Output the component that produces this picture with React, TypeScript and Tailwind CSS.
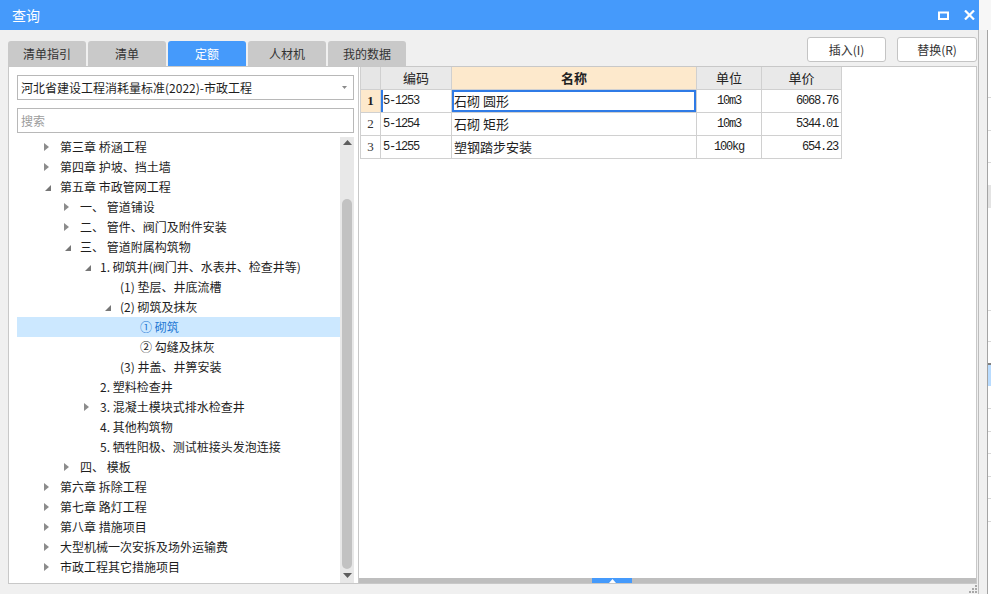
import React from 'react';

type Node = { l: number; t: string; a: '' | 'c' | 'e'; sel?: boolean };

const tree: Node[] = [
  { l: 0, t: '第三章 桥涵工程', a: 'c' },
  { l: 0, t: '第四章 护坡、挡土墙', a: 'c' },
  { l: 0, t: '第五章 市政管网工程', a: 'e' },
  { l: 1, t: '一、 管道铺设', a: 'c' },
  { l: 1, t: '二、 管件、阀门及附件安装', a: 'c' },
  { l: 1, t: '三、 管道附属构筑物', a: 'e' },
  { l: 2, t: '1. 砌筑井(阀门井、水表井、检查井等)', a: 'e' },
  { l: 3, t: '(1) 垫层、井底流槽', a: '' },
  { l: 3, t: '(2) 砌筑及抹灰', a: 'e' },
  { l: 4, t: '① 砌筑', a: '', sel: true },
  { l: 4, t: '② 勾缝及抹灰', a: '' },
  { l: 3, t: '(3) 井盖、井箅安装', a: '' },
  { l: 2, t: '2. 塑料检查井', a: '' },
  { l: 2, t: '3. 混凝土模块式排水检查井', a: 'c' },
  { l: 2, t: '4. 其他构筑物', a: '' },
  { l: 2, t: '5. 牺牲阳极、测试桩接头发泡连接', a: '' },
  { l: 1, t: '四、 模板', a: 'c' },
  { l: 0, t: '第六章 拆除工程', a: 'c' },
  { l: 0, t: '第七章 路灯工程', a: 'c' },
  { l: 0, t: '第八章 措施项目', a: 'c' },
  { l: 0, t: '大型机械一次安拆及场外运输费', a: 'c' },
  { l: 0, t: '市政工程其它措施项目', a: 'c' },
];

const rows = [
  { n: '1', code: '5-1253', name: '石砌 圆形', unit: '10m3', price: '6068.76' },
  { n: '2', code: '5-1254', name: '石砌 矩形', unit: '10m3', price: '5344.01' },
  { n: '3', code: '5-1255', name: '塑钢踏步安装', unit: '100kg', price: '654.23' },
];

// background window peeking out on the right
const strip = [
  { h: 68, c: 'border-b border-[#d8d8d8]' },
  { h: 33, c: 'border-b border-[#d8d8d8]' },
  { h: 32, c: 'border-b border-[#d8d8d8]' },
  { h: 22, c: '' },
  { h: 23, c: 'bg-[#e4e4e4]' },
  { h: 103, c: 'border-b border-[#d8d8d8]' },
  { h: 31, c: 'border-b border-[#d8d8d8]' },
  { h: 23, c: 'border-b-2 border-[#808080]' },
  { h: 21, c: 'bg-[#b9dcff]' },
  { h: 23, c: 'border-b border-[#d8d8d8]' },
  { h: 23, c: 'border-b border-[#d8d8d8]' },
  { h: 22, c: 'border-b border-[#d8d8d8]' },
  { h: 23, c: 'border-b border-[#d8d8d8]' },
  { h: 22, c: 'border-b border-[#d8d8d8]' },
  { h: 23, c: 'border-b border-[#d8d8d8]' },
];

function Arrow({ a }: { a: Node['a'] }) {
  if (a === 'c')
    return (
      <svg width="5" height="8" viewBox="0 0 5 8" className="ml-[1px]">
        <polygon points="0,0 5,4 0,8" fill="#8c8c8c" />
      </svg>
    );
  if (a === 'e')
    return (
      <svg width="6" height="6" viewBox="0 0 6 6" className="ml-[2px] mt-[2px]">
        <polygon points="6,0 6,6 0,6" fill="#767676" />
      </svg>
    );
  return null;
}

const mono = "font-['Liberation_Mono',monospace] text-[12px] tracking-[-1.2px]";

export default function App() {
  const tabs = ['清单指引', '清单', '定额', '人材机', '我的数据'];

  return (
    <div className="w-[991px] h-[594px] flex overflow-hidden bg-[#f0f0f0] text-[12px] text-[#1e1e1e] font-['Noto_Sans_CJK_SC','Microsoft_YaHei',sans-serif]">
      <div className="relative w-[979px] h-full flex flex-col shrink-0">
        {/* title bar */}
        <div className="h-[30px] bg-[#459afb] flex items-center pl-[12px] pr-[4px] text-white">
          <span className="text-[14px]">查询</span>
          <div className="ml-auto flex items-center gap-[15px]">
            <svg width="11" height="9" viewBox="0 0 11 9">
              <rect x="1" y="1.5" width="9" height="6.5" fill="none" stroke="#fff" strokeWidth="2" />
            </svg>
            <svg width="11" height="10" viewBox="0 0 11 10">
              <path d="M1 0.5 L10 9.5 M10 0.5 L1 9.5" stroke="#fff" strokeWidth="2.2" />
            </svg>
          </div>
        </div>

        <div className="flex-1 flex flex-col pl-[8px] pr-[1px] border-r border-[#bdbdbd]">
          {/* tabs + buttons */}
          <div className="h-[36px] flex items-end">
            <div className="flex gap-[2px]">
              {tabs.map((t) => (
                <div
                  key={t}
                  className={
                    'w-[78px] h-[25px] rounded-t-[3px] flex items-center justify-center ' +
                    (t === '定额' ? 'bg-[#459afb] text-white' : 'bg-[#c9c9c9] text-[#333]')
                  }
                >
                  {t}
                </div>
              ))}
            </div>
            <div className="flex-1 self-start mt-[7px] flex justify-end gap-[11px]">
              <button className="w-[79px] h-[25px] bg-white border border-[#c4c4c4] rounded-[3px] text-[#333]">插入(I)</button>
              <button className="w-[80px] h-[25px] bg-white border border-[#c4c4c4] rounded-[3px] text-[#333]">替换(R)</button>
            </div>
          </div>

          {/* panels */}
          <div className="h-[518px] flex">
            {/* left */}
            <div className="w-[351px] h-full bg-white border border-[#c8c8c8] flex flex-col pl-[8px] pr-[4px] pt-[8px]">
              <div className="h-[25px] border border-[#b8b8b8] flex items-center pl-[3px] pr-[6px]">
                <span>河北省建设工程消耗量标准(2022)-市政工程</span>
                <svg width="5" height="3" viewBox="0 0 5 3" className="ml-auto">
                  <polygon points="0,0 5,0 2.5,3" fill="#8a8a8a" />
                </svg>
              </div>
              <div className="mt-[8px] h-[25px] border border-[#b8b8b8] flex items-center pl-[3px] text-[#9c9c9c]">搜索</div>
              <div className="mt-[4px] flex-1 flex min-h-0">
                <div className="flex-1 flex flex-col">
                  {tree.map((n, i) => (
                    <div
                      key={i}
                      className={'h-[20px] shrink-0 flex items-center ' + (n.sel ? 'bg-[#cce8ff] text-[#1f78d4]' : '')}
                      style={{ paddingLeft: 26 + n.l * 20 }}
                    >
                      <div className="w-[17px] flex items-center">
                        <Arrow a={n.a} />
                      </div>
                      <span className="whitespace-nowrap">{n.t}</span>
                    </div>
                  ))}
                </div>
                <div className="w-[14px] bg-[#e8e8e8] flex flex-col items-center">
                  <svg width="9" height="5" viewBox="0 0 9 5" className="mt-[3px]">
                    <polygon points="0,5 9,5 4.5,0" fill="#5e5e5e" />
                  </svg>
                  <div className="mt-[54px] w-[10px] h-[370px] rounded-[5px] bg-[#c2c2c2]" />
                  <svg width="9" height="5" viewBox="0 0 9 5" className="mt-[4px]">
                    <polygon points="0,0 9,0 4.5,5" fill="#5e5e5e" />
                  </svg>
                </div>
              </div>
            </div>

            {/* right grid */}
            <div className="flex-1 h-full bg-white border border-l-0 border-[#c8c8c8] flex flex-col">
              <div className="flex flex-col w-[482px] ml-[1px]">
                <div className="flex h-[23px] text-[13px] text-[#222]">
                  <div className="w-[21px] bg-[#e6e6e6] border-r border-b border-l border-[#d0d0d0]" />
                  <div className="w-[71px] bg-[#e9e9e9] border-r border-b border-[#d0d0d0] flex items-center justify-center">编码</div>
                  <div className="w-[245px] bg-[#fde9cc] border-r border-b border-[#d0d0d0] flex items-center justify-center font-bold">名称</div>
                  <div className="w-[65px] bg-[#e9e9e9] border-r border-b border-[#d0d0d0] flex items-center justify-center">单位</div>
                  <div className="w-[80px] bg-[#e9e9e9] border-r border-b border-[#d0d0d0] flex items-center justify-center">单价</div>
                </div>
                {rows.map((r, i) => (
                  <div key={r.n} className="flex h-[23px]">
                    <div
                      className={
                        "w-[21px] border-r border-b border-l border-[#d0d0d0] flex items-center justify-center font-['Liberation_Serif',serif] text-[13px] " +
                        (i === 0 ? 'bg-[#fde9cc] font-bold' : 'text-[#333]')
                      }
                    >
                      {r.n}
                    </div>
                    <div
                      className={
                        'w-[71px] border-r border-b border-[#d0d0d0] flex items-center pl-[2px] ' +
                        mono +
                        (i === 0 ? ' shadow-[inset_2px_0_0_#2f7be6]' : '')
                      }
                    >
                      {r.code}
                    </div>
                    <div
                      className={
                        'w-[245px] border-r border-b border-[#d0d0d0] flex items-center pl-[2px] text-[13px] ' +
                        (i === 0 ? 'shadow-[inset_0_0_0_2px_#2f7be6]' : '')
                      }
                    >
                      {r.name}
                    </div>
                    <div className={'w-[65px] border-r border-b border-[#d0d0d0] flex items-center justify-center ' + mono}>
                      {r.unit}
                    </div>
                    <div className={'w-[80px] border-r border-b border-[#d0d0d0] flex items-center justify-end pr-[3px] ' + mono}>
                      {r.price}
                    </div>
                  </div>
                ))}
              </div>
              <div className="mt-auto h-[5px] bg-[#bebebe] flex">
                <div className="ml-[233px] w-[40px] h-full bg-[#459afb] flex items-center justify-center">
                  <svg width="7" height="4" viewBox="0 0 7 4">
                    <polygon points="0,4 7,4 3.5,0" fill="#fff" />
                  </svg>
                </div>
              </div>
            </div>
          </div>
          <div className="flex-1" />
        </div>

        {/* resize grip */}
        <svg width="8" height="8" viewBox="0 0 8 8" className="absolute right-[2px] bottom-[1px]">
          <rect x="6" y="0" width="2" height="2" fill="#a8a8a8" />
          <rect x="3" y="3" width="2" height="2" fill="#a8a8a8" />
          <rect x="6" y="3" width="2" height="2" fill="#a8a8a8" />
          <rect x="0" y="6" width="2" height="2" fill="#a8a8a8" />
          <rect x="3" y="6" width="2" height="2" fill="#a8a8a8" />
          <rect x="6" y="6" width="2" height="2" fill="#a8a8a8" />
        </svg>
      </div>

      {/* window behind */}
      <div className="flex-1 flex flex-col">
        <div className="h-[30px] bg-[#f7f7f7]" />
        <div className="flex-1 flex">
          <div className="w-[8px] bg-[#f0f0f0]" />
          <div className="w-[1px] bg-[#a4a4a4]" />
          <div className="flex-1 bg-white flex flex-col">
            {strip.map((s, i) => (
              <div key={i} className={'shrink-0 ' + s.c} style={{ height: s.h }} />
            ))}
          </div>
        </div>
      </div>
    </div>
  );
}
